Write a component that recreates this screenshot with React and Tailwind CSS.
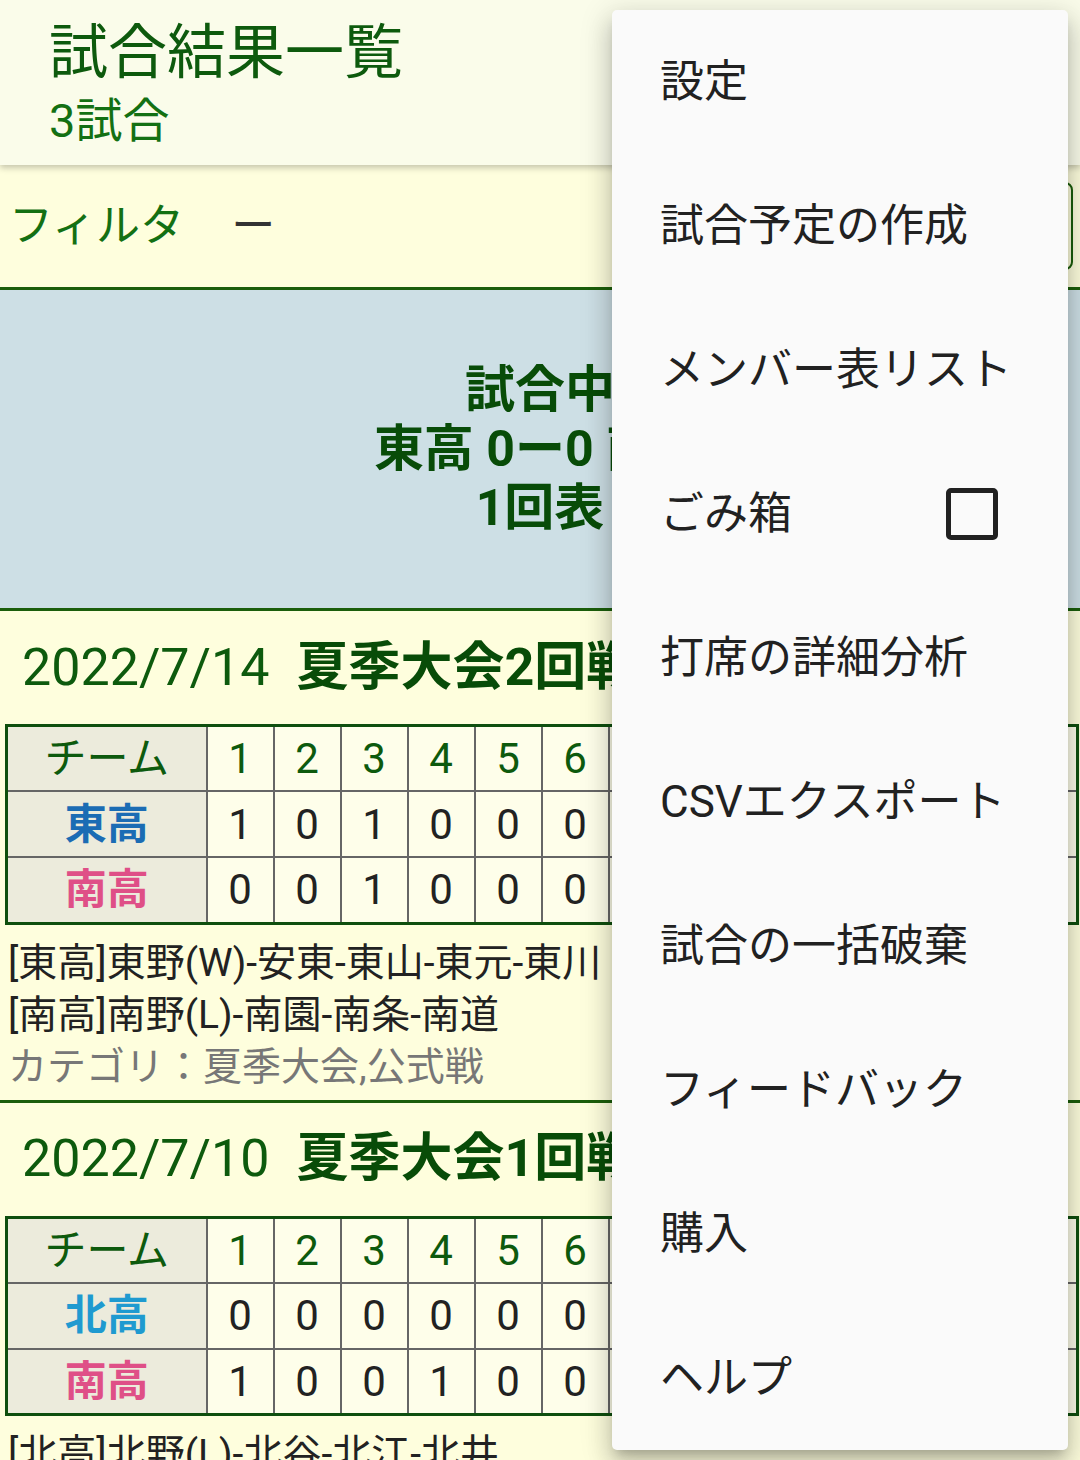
import { useState } from 'react';

const games = [
  {
    id: 1,
    date: '2022/7/14',
    title: '夏季大会2回戦',
    teams: [
      { name: '東高', color: 'text-[#1b6cb4]', scores: ['1', '0', '1', '0', '0', '0', '0', '1', '0', '', '3', '7', '0'] },
      { name: '南高', color: 'text-[#df4f87]', scores: ['0', '0', '1', '0', '0', '0', '0', '0', '0', '', '1', '4', '1'] },
    ],
    lines: ['[東高]東野(W)-安東-東山-東元-東川', '[南高]南野(L)-南園-南条-南道'],
    category: 'カテゴリ：夏季大会,公式戦',
  },
  {
    id: 2,
    date: '2022/7/10',
    title: '夏季大会1回戦',
    teams: [
      { name: '北高', color: 'text-[#1f9ad0]', scores: ['0', '0', '0', '0', '0', '0', '0', '0', '0', '', '0', '3', '2'] },
      { name: '南高', color: 'text-[#df4f87]', scores: ['1', '0', '0', '1', '0', '0', '0', '0', 'x', '', '2', '6', '0'] },
    ],
    lines: ['[北高]北野(L)-北谷-北江-北井', '[南高]南野(W)-南園-南条'],
    category: 'カテゴリ：夏季大会,公式戦',
  },
];

const headers = ['1', '2', '3', '4', '5', '6', '7', '8', '9', '10', '計', '安', '失'];

const menuItems = [
  '設定',
  '試合予定の作成',
  'メンバー表リスト',
  'ごみ箱',
  '打席の詳細分析',
  'CSVエクスポート',
  '試合の一括破棄',
  'フィードバック',
  '購入',
  'ヘルプ',
];

function ScoreTable({ teams }) {
  return (
    <table className="w-[1070px] ml-[5px] border-collapse border-[3px] border-[#0e4f0e] table-fixed">
      <thead>
        <tr className="h-[65px]">
          <th className="w-[200px] bg-[#ecebdc] border border-[#666] font-normal text-[42px] text-[#0d5a0d]">チーム</th>
          {headers.map((h) => (
            <th key={h} className="w-[67px] bg-[#fefeea] border-2 border-[#666] font-normal text-[42px] text-[#0d5a0d]">
              {h}
            </th>
          ))}
        </tr>
      </thead>
      <tbody>
        {teams.map((t) => (
          <tr key={t.name} className="h-[66px]">
            <td className={`bg-[#ecebdc] border-2 border-[#666] text-center font-bold text-[42px] ${t.color}`}>{t.name}</td>
            {t.scores.map((s, i) => (
              <td key={i} className="bg-[#fefeea] border-2 border-[#666] text-center text-[42px] text-[#222]">
                {s}
              </td>
            ))}
          </tr>
        ))}
      </tbody>
    </table>
  );
}

function GameCard({ game }) {
  return (
    <div className="border-b-[3px] border-[#1b5e0b] pb-[7px]">
      <div className="h-[113px] flex items-center pl-[22px] text-[#0d5a0d] leading-none">
        <span className="text-[52px]">{game.date}</span>
        <span className="text-[52px] font-bold text-[#084c08] ml-[27px]">{game.title}</span>
      </div>
      <ScoreTable teams={game.teams} />
      <div className="mt-[12px] pl-[8px] text-[39px] leading-[52px] text-[#222]">
        {game.lines.map((l) => (
          <p key={l}>{l}</p>
        ))}
        <p className="text-[#777]">{game.category}</p>
      </div>
    </div>
  );
}

export default function App() {
  const [trash, setTrash] = useState(false);

  return (
    <div
      className="relative w-[1080px] h-[1460px] overflow-hidden bg-[#fefedd]"
      style={{ fontFamily: 'Roboto, "Noto Sans CJK JP", sans-serif' }}
    >
      {/* Header */}
      <div className="relative z-10 h-[165px] bg-[#fafcea] shadow-[0_3px_6px_rgba(0,0,0,0.22)] pl-[49px] pt-[17px]">
        <h1 className="text-[59px] leading-[72px] text-[#0d5a0d]">試合結果一覧</h1>
        <p className="text-[47px] leading-[64px] text-[#137013]">3試合</p>
      </div>

      {/* Filter */}
      <div className="h-[125px] flex items-center pl-[9px] pr-[7px] border-b-[3px] border-[#1b5e0b]">
        <span className="text-[44px] text-[#137013]">フィルタ</span>
        <span className="text-[44px] text-[#333] ml-[47px]">ー</span>
        <button className="ml-auto w-[300px] h-[88px] border-2 border-[#1b5e0b] rounded-lg text-[38px] text-[#137013]">
          絞り込み
        </button>
      </div>

      {/* Current game */}
      <div className="h-[321px] bg-[#cddfe5] border-b-[3px] border-[#1b5e0b] flex flex-col items-center justify-center text-[50px] leading-[59px] font-bold text-[#084c08]">
        <p>試合中</p>
        <p>東高 0ー0 南高</p>
        <p>1回表</p>
      </div>

      {games.map((g) => (
        <GameCard key={g.id} game={g} />
      ))}

      {/* Overflow menu */}
      <div className="absolute left-[612px] top-[10px] w-[456px] bg-[#fafafa] rounded-[5px] z-20 shadow-[0_8px_10px_-5px_rgba(0,0,0,0.2),0_16px_24px_2px_rgba(0,0,0,0.14),0_6px_30px_5px_rgba(0,0,0,0.12)]">
        {menuItems.map((item) => (
          <div key={item} className="h-[144px] flex items-center justify-between pl-[48px] pr-[70px] text-[44px] text-[#212121] whitespace-nowrap">
            <span>{item}</span>
            {item === 'ごみ箱' && (
              <button
                onClick={() => setTrash(!trash)}
                className="w-[52px] h-[52px] border-[5px] border-[#212121] rounded-[5px]"
                aria-label="ごみ箱"
              />
            )}
          </div>
        ))}
      </div>
    </div>
  );
}
